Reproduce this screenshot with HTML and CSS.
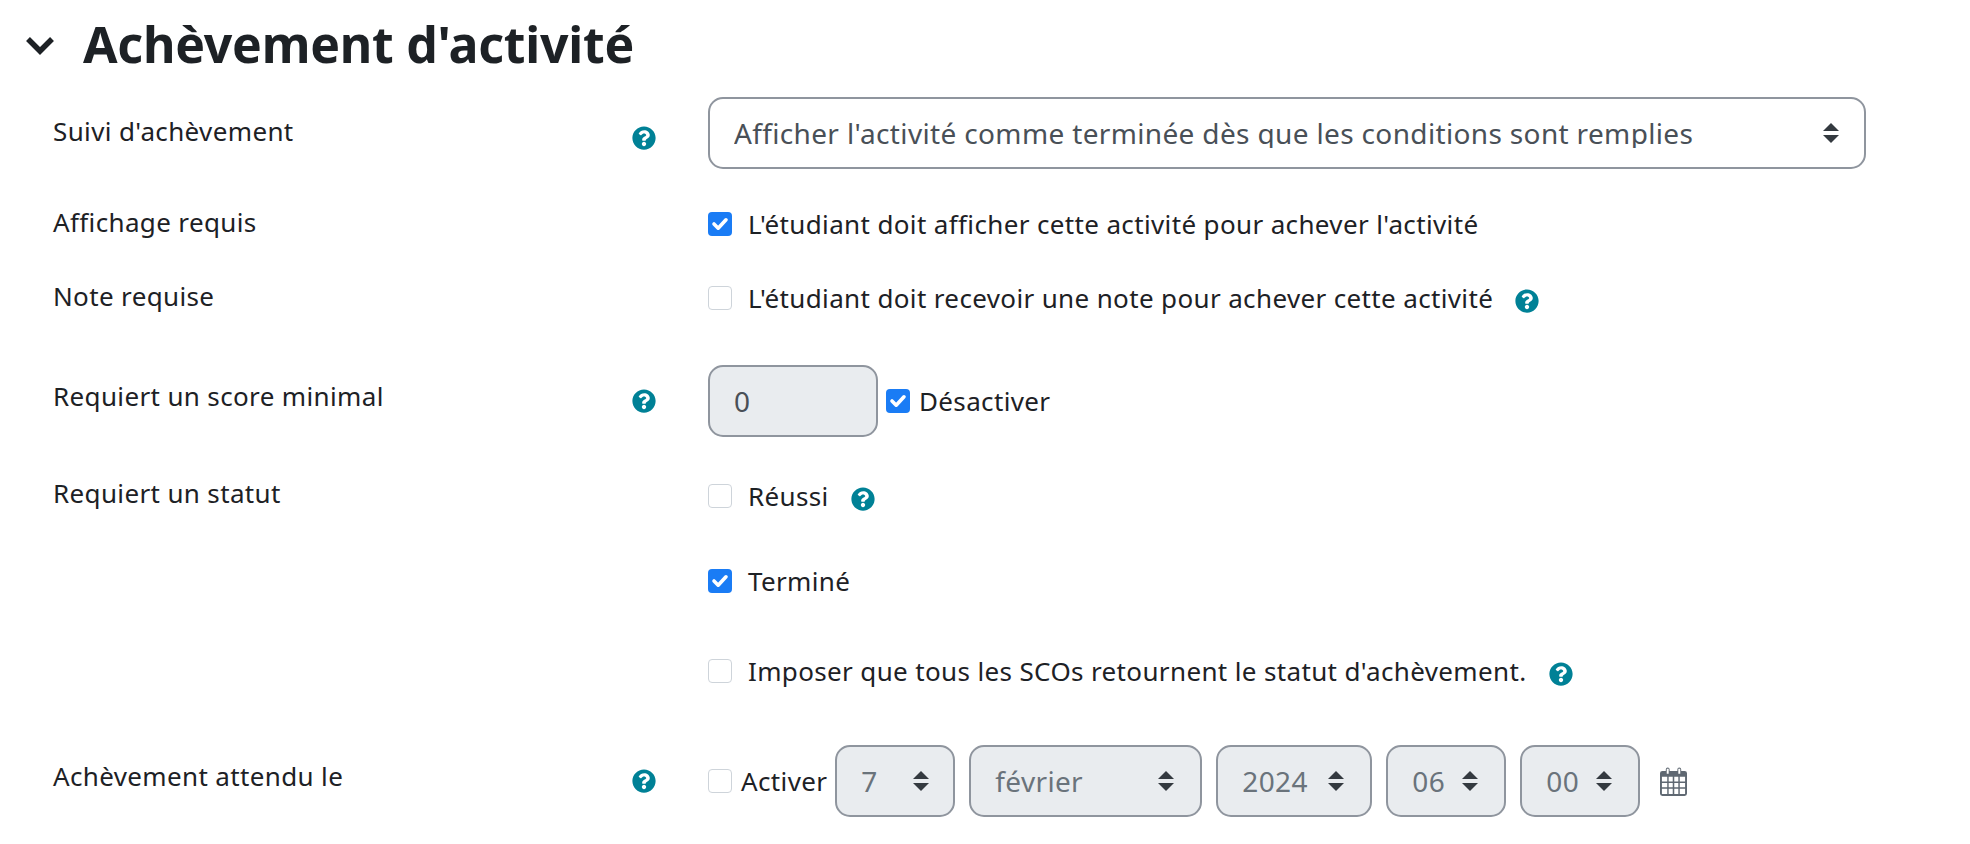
FILE: index.html
```html
<!DOCTYPE html>
<html lang="fr">
<head>
  <meta charset="UTF-8" />
  <title>Achèvement d'activité</title>
  <link rel="stylesheet" href="styles.css">
</head>
<body>
  <svg class="sprites" width="0" height="0">
    <symbol id="aide" viewBox="0 0 512 512">
      <path d="M504 256c0 136.997-111.043 248-248 248S8 392.997 8 256C8 119.083 119.043 8 256 8s248 111.083 248 248zM262.655 90c-54.497 0-89.255 22.957-116.549 63.758-3.536 5.286-2.353 12.415 2.715 16.258l34.699 26.31c5.205 3.947 12.621 3.008 16.665-2.122 17.864-22.658 30.113-35.797 57.303-35.797 20.429 0 45.698 13.148 45.698 32.958 0 14.976-12.363 22.667-32.534 33.976C247.128 238.528 216 254.941 216 296v4c0 6.627 5.373 12 12 12h56c6.627 0 12-5.373 12-12v-1.333c0-28.462 83.186-29.647 83.186-106.667 0-58.002-60.165-102-116.531-102zM256 338c-25.365 0-46 20.635-46 46 0 25.364 20.635 46 46 46s46-20.636 46-46c0-25.365-20.635-46-46-46z"/>
    </symbol>
  </svg>

  <form class="formulaire">
    <h3 class="titre">
      <svg class="chevron" viewBox="0 0 30 20"><path d="M3 4l12 12L27 4" fill="none" stroke="#1d2125" stroke-width="5.5"/></svg>
      Achèvement d'activité
    </h3>

    <div class="ligne ligne-suivi">
      <label class="libelle">Suivi d'achèvement</label>
      <svg class="aide aide-bas"><use href="#aide"/></svg>
      <div class="champ">
        <select class="liste liste-large">
          <option>Afficher l'activité comme terminée dès que les conditions sont remplies</option>
        </select>
      </div>
    </div>

    <div class="ligne ligne-affichage">
      <label class="libelle">Affichage requis</label>
      <span></span>
      <div class="champ">
        <label class="case"><input type="checkbox" checked> L'étudiant doit afficher cette activité pour achever l'activité</label>
      </div>
    </div>

    <div class="ligne ligne-note">
      <label class="libelle">Note requise</label>
      <span></span>
      <div class="champ">
        <label class="case"><input type="checkbox"> L'étudiant doit recevoir une note pour achever cette activité</label>
        <svg class="aide aide-texte"><use href="#aide"/></svg>
      </div>
    </div>

    <div class="ligne ligne-score">
      <label class="libelle libelle-haut">Requiert un score minimal</label>
      <svg class="aide"><use href="#aide"/></svg>
      <div class="champ">
        <input class="saisie" type="text" value="0" disabled>
        <label class="case case-serree"><input type="checkbox" checked> Désactiver</label>
      </div>
    </div>

    <div class="ligne ligne-statut">
      <label class="libelle">Requiert un statut</label>
      <span></span>
      <div class="champ champ-pile">
        <div class="option"><label class="case"><input type="checkbox"> Réussi</label>
          <svg class="aide aide-texte"><use href="#aide"/></svg></div>
        <div class="option"><label class="case"><input type="checkbox" checked> Terminé</label></div>
        <div class="option"><label class="case"><input type="checkbox"> Imposer que tous les SCOs retournent le statut d'achèvement.</label>
          <svg class="aide aide-texte"><use href="#aide"/></svg></div>
      </div>
    </div>

    <div class="ligne">
      <label class="libelle libelle-haut">Achèvement attendu le</label>
      <svg class="aide"><use href="#aide"/></svg>
      <div class="champ">
        <label class="case case-serree"><input type="checkbox"> Activer</label>
        <div class="date">
          <select class="liste liste-off l-jour" disabled><option>7</option></select>
          <select class="liste liste-off l-mois" disabled><option>février</option></select>
          <select class="liste liste-off l-annee" disabled><option>2024</option></select>
          <select class="liste liste-off l-heure" disabled><option>06</option></select>
          <select class="liste liste-off l-heure" disabled><option>00</option></select>
        </div>
        <svg class="calendrier" viewBox="0 0 28 30">
          <path fill="#5f6872" d="M2.500 4H6V2.500a2 2 0 0 1 4 0V4h8V2.500a2 2 0 0 1 4 0V4h3.500A2.500 2.500 0 0 1 28 6.500v21a2.500 2.500 0 0 1-2.500 2.500h-23A2.500 2.500 0 0 1 0 27.500v-21A2.500 2.500 0 0 1 2.500 4z"/>
          <path fill="#fff" d="M7 1.800h2V7H7zM19 1.800h2V7h-2z"/>
          <path fill="#fff" d="M2 10h5.500v5H2zM9 10h4.200v5H9zM14.800 10H19v5h-4.200zM20.500 10H26v5h-5.500zM2 16.500h5.500v4.500H2zM9 16.500h4.200v4.500H9zM14.800 16.500H19v4.500h-4.200zM20.500 16.500H26v4.500h-5.500zM2 22.500h5.500V28H2zM9 22.500h4.200V28H9zM14.800 22.500H19V28h-4.200zM20.500 22.500H26V28h-5.500z"/>
        </svg>
      </div>
    </div>
  </form>
</body>
</html>
```

FILE: styles.css
```css
body {
  margin: 0;
  background: #fff;
  color: #1d2125;
  font-family: "Noto Sans", sans-serif;
  font-size: 26px;
  letter-spacing: 0.36px;
  line-height: 30px;
}

.sprites {
  position: absolute;
}

.formulaire {
  padding: 14px 0 0 25px;
}

.titre {
  display: flex;
  align-items: center;
  margin: 0 0 22px;
  height: 61px;
  font-size: 50px;
  font-weight: 700;
  letter-spacing: -0.25px;
  line-height: 61px;
}

.chevron {
  width: 30px;
  height: 20px;
  margin-right: 28px;
}

.ligne {
  display: grid;
  grid-template-columns: 579px 76px 1fr;
  padding-left: 28px;
  align-items: center;
}

.ligne-suivi { margin-bottom: 37px; }
.ligne-affichage { margin-bottom: 38px; }
.ligne-note { margin-bottom: 49px; }
.ligne-score { margin-bottom: 41px; }
.ligne-statut { margin-bottom: 56px; align-items: start; }

.libelle {
  padding-bottom: 5px;
}

.libelle-haut {
  padding-bottom: 11px;
}

.ligne-statut .libelle {
  padding: 0;
}

.aide {
  width: 24px;
  height: 24px;
  fill: #008196;
}

.aide-bas { margin-top: 10px; }

.aide-texte {
  margin: 5px 0 0 22px;
}

.champ {
  display: flex;
  align-items: center;
}

.champ-pile {
  flex-direction: column;
  align-items: flex-start;
}

.option {
  display: flex;
  align-items: center;
  margin-bottom: 54px;
}

.option:nth-child(1) { margin-bottom: 49px; }
.option:last-child { margin-bottom: 0; }

.case {
  display: flex;
  align-items: center;
  height: 36px;
  white-space: nowrap;
}

.case input {
  appearance: none;
  width: 24px;
  height: 24px;
  margin: 0 16px 0 0;
  border: 1px solid #ced4da;
  border-radius: 4px;
  background: #fff;
}

.case input:checked {
  background: #1a7cf5 url("data:image/svg+xml,%3csvg xmlns='http://www.w3.org/2000/svg' viewBox='0 0 20 20'%3e%3cpath fill='none' stroke='%23fff' stroke-linecap='round' stroke-linejoin='round' stroke-width='3' d='M5 10l3.500 3.500L15 6.500'/%3e%3c/svg%3e") center / 100% no-repeat;
  border: none;
}

.case-serree input {
  margin-right: 9px;
}

.saisie {
  width: 170px;
  height: 72px;
  box-sizing: border-box;
  padding: 0 24px;
  border: 2px solid #8f959e;
  border-radius: 15px;
  background: #e9ecef;
  color: #495057;
  font: inherit;
  font-size: 28px;
  margin-right: 8px;
}

.liste {
  appearance: none;
  height: 72px;
  box-sizing: border-box;
  padding: 0 50px 0 24px;
  border: 2px solid #8f959e;
  border-radius: 15px;
  background: #fff url("data:image/svg+xml,%3csvg xmlns='http://www.w3.org/2000/svg' viewBox='0 0 16 20'%3e%3cpath fill='%23343a40' d='M8 0l8 8H0zM8 20l8-8H0z'/%3e%3c/svg%3e") right 26px center / 16px 20px no-repeat;
  color: #495057;
  font: inherit;
  font-size: 28px;
  letter-spacing: 0.35px;
  opacity: 1;
}

.liste-large {
  width: 1158px;
  background-position: right 25px center;
}

.liste-off {
  background-color: #e9ecef;
  color: #6a737b;
}

.date {
  display: flex;
  gap: 14px;
  margin-left: 8px;
}

.l-jour { width: 120px; background-position: right 24px center; }
.l-mois { width: 233px; }
.l-annee { width: 156px; }
.l-heure { width: 120px; padding-right: 30px; }

.calendrier {
  width: 27px;
  height: 29px;
  margin-left: 20px;
}
```
